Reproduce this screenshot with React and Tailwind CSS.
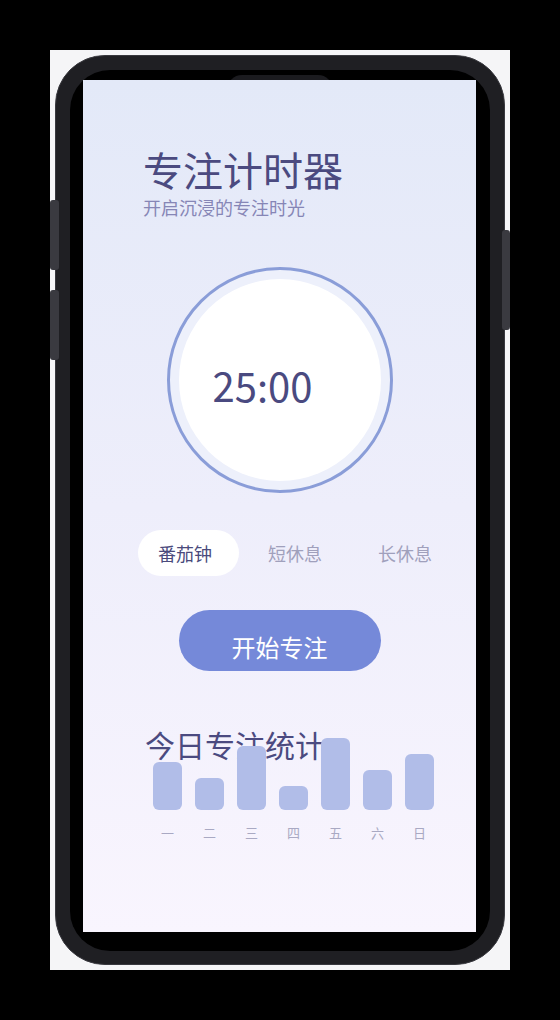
import React from "react";

const bars = [
  { h: 48, l: "一" },
  { h: 32, l: "二" },
  { h: 64, l: "三" },
  { h: 24, l: "四" },
  { h: 72, l: "五" },
  { h: 40, l: "六" },
  { h: 56, l: "日" },
];

export default function App() {
  return (
    <div
      className="w-[560px] h-[1020px] bg-black p-[50px]"
      style={{ fontFamily: '"Noto Sans CJK SC", "Noto Sans", sans-serif' }}
    >
      <div className="w-[460px] h-[920px] bg-[#f5f5f7] p-[5px]">
        <div className="relative w-[450px] h-[910px] rounded-[50px] bg-[#1f1f23] border border-[#38383e] p-[14px]">
          {/* notch */}
          <div className="absolute top-[19px] left-[171px] w-[106px] h-[30px] rounded-[16px] bg-[#1b1b1f]" />
          {/* side buttons */}
          <div className="absolute -left-[6px] top-[144px] w-[9px] h-[70px] rounded-[3px] bg-[#3a3a40]" />
          <div className="absolute -left-[6px] top-[234px] w-[9px] h-[70px] rounded-[3px] bg-[#3a3a40]" />
          <div className="absolute left-[446px] top-[174px] w-[8px] h-[100px] rounded-[3px] bg-[#3a3a40]" />

          <div className="w-[420px] h-[881px] rounded-[40px] bg-black pt-[10px] pl-[13px]">
            <div className="relative z-10 w-[393px] h-[852px] bg-linear-to-b from-[#e3e9f8] via-[#eeeefb] to-[#f9f5fe] flex flex-col">
              {/* title */}
              <div className="mt-[69px] ml-[60px] text-[40px] leading-none text-[#4b4a80]">
                专注计时器
              </div>
              <div className="mt-[9px] ml-[60px] text-[18px] leading-none text-[#8686b6]">
                开启沉浸的专注时光
              </div>

              {/* timer */}
              <div className="mt-[51px] self-center w-[226px] h-[226px] rounded-full border-[3px] border-[#8a9dd8] bg-[#edf0fb] flex items-center justify-center">
                <div className="w-[202px] h-[202px] rounded-full bg-white flex items-center justify-center pt-[10px] pr-[34px]">
                  <span className="text-[40px] leading-none text-[#4a4a80]">25:00</span>
                </div>
              </div>

              {/* tabs */}
              <div className="mt-[37px] ml-[55px] flex gap-[9px]">
                <div className="w-[101px] h-[46px] rounded-full bg-white pl-[20px] flex items-center text-[18px] leading-none text-[#4a4a7c]">
                  番茄钟
                </div>
                <div className="w-[101px] h-[46px] pl-[20px] flex items-center text-[18px] leading-none text-[#a0a0bc]">
                  短休息
                </div>
                <div className="w-[101px] h-[46px] pl-[20px] flex items-center text-[18px] leading-none text-[#a0a0bc]">
                  长休息
                </div>
              </div>

              {/* button */}
              <div className="mt-[34px] self-center w-[202px] h-[61px] rounded-full bg-[#7589d9] flex items-center justify-center pt-[12px] text-[24px] leading-none text-white">
                开始专注
              </div>

              {/* stats */}
              <div className="mt-[58px] ml-[62px] text-[30px] leading-none text-[#4b4a80]">
                今日专注统计
              </div>
              <div className="relative -mt-[21px] ml-[70px] flex gap-[13px]">
                {bars.map((b) => (
                  <div key={b.l} className="w-[29px] flex flex-col items-center">
                    <div className="h-[72px] w-full flex items-end">
                      <div
                        className="w-full rounded-[6px] bg-[#b1bde8]"
                        style={{ height: b.h }}
                      />
                    </div>
                    <div className="mt-[16px] text-[13px] leading-none text-[#a9a9c3]">
                      {b.l}
                    </div>
                  </div>
                ))}
              </div>
            </div>
          </div>
        </div>
      </div>
    </div>
  );
}
